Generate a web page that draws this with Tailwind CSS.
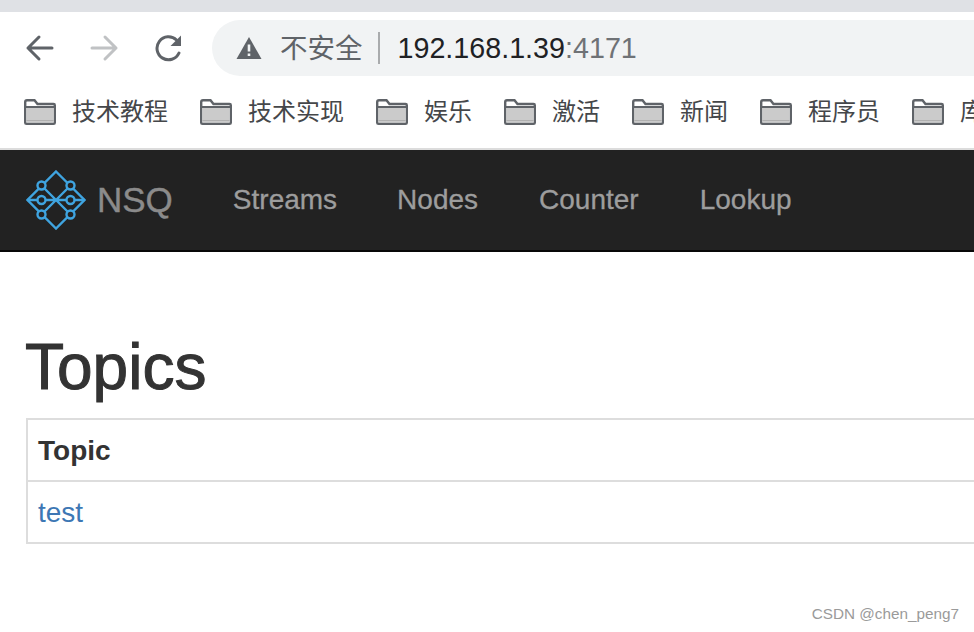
<!DOCTYPE html>
<html lang="zh-CN">
<head>
    <meta charset="UTF-8" />
    <script src="https://cdn.jsdelivr.net/npm/@tailwindcss/browser@4"></script>
    <title>NSQ</title>
</head>
<body class="relative w-[974px] h-[632px] overflow-hidden bg-white font-['Liberation_Sans','Noto_Sans_CJK_SC',sans-serif]">

    <!-- browser chrome -->
    <div class="h-3 bg-[#dfe1e5]"></div>
    <div class="flex items-end h-16">
        <div class="flex items-center h-14 w-[212px] pl-[25px] gap-[35px] shrink-0">
            <svg class="w-[30px] h-[30px]" viewBox="0 0 30 30" fill="none" stroke="#5f6368" stroke-width="3" stroke-linecap="round" stroke-linejoin="round"><path d="M27 15H3M14 4L3 15 14 26"/></svg>
            <svg class="w-[30px] h-[30px]" viewBox="0 0 30 30" fill="none" stroke="#c0c2c4" stroke-width="3" stroke-linecap="round" stroke-linejoin="round"><path d="M2 15H26M15 4L26 15 15 26"/></svg>
            <svg class="w-[30px] h-[30px]" viewBox="0 0 30 30" fill="none"><path d="M24 20A11.500 11.500 0 1 1 21.500 7" stroke="#5f6368" stroke-width="3" stroke-linecap="round"/><path d="M26 2.500V13H15.500Z" fill="#5f6368"/></svg>
        </div>
        <div class="flex items-center flex-1 h-14 bg-[#f1f3f4] rounded-l-[28px]">
            <svg class="ml-6 w-[26px] h-[24px]" viewBox="0 0 26 24"><path d="M13 1L25.500 23H.5Z" fill="#5f6368"/><path d="M11.700 8.500H14.300V15.500H11.700ZM11.700 17.500H14.300V20H11.700Z" fill="#f1f3f4"/></svg>
            <span class="ml-[18px] pt-px text-[27.500px] leading-none text-[#5f6368]">不安全</span>
            <div class="ml-[15px] w-0.5 h-8 bg-[#a9abad]"></div>
            <span class="ml-[18px] text-[28.700px] leading-none text-[#202124]">192.168.1.39<span class="text-[#6f7276]">:4171</span></span>
        </div>
    </div>
    <div class="flex items-center h-[72px] pl-6 text-[24px] leading-none text-[#45474a] whitespace-nowrap">
        <div class="flex items-center w-[176px] shrink-0"><svg class="w-8 h-[26px]" viewBox="0 0 32 26"><path d="M1.200 23.800V3Q1.200 1.200 3 1.200H10.500L13.500 5H29.500Q30.800 5 30.800 6.200V23.800Q30.800 24.800 29.500 24.800H2.500Q1.200 24.800 1.200 23.800Z" fill="#fff" stroke="#5f6368" stroke-width="2.400"/><path d="M2.400 8.500H29.600V23.600H2.400Z" fill="#cbcbcb"/><path d="M2 8H30" stroke="#5f6368" stroke-width="2"/><path d="M2.400 21.500H29.600" stroke="#b0b0b0" stroke-width="1"/></svg><span class="ml-4">技术教程</span></div>
        <div class="flex items-center w-[176px] shrink-0"><svg class="w-8 h-[26px]" viewBox="0 0 32 26"><path d="M1.200 23.800V3Q1.200 1.200 3 1.200H10.500L13.500 5H29.500Q30.800 5 30.800 6.200V23.800Q30.800 24.800 29.500 24.800H2.500Q1.200 24.800 1.200 23.800Z" fill="#fff" stroke="#5f6368" stroke-width="2.400"/><path d="M2.400 8.500H29.600V23.600H2.400Z" fill="#cbcbcb"/><path d="M2 8H30" stroke="#5f6368" stroke-width="2"/><path d="M2.400 21.500H29.600" stroke="#b0b0b0" stroke-width="1"/></svg><span class="ml-4">技术实现</span></div>
        <div class="flex items-center w-[128px] shrink-0"><svg class="w-8 h-[26px]" viewBox="0 0 32 26"><path d="M1.200 23.800V3Q1.200 1.200 3 1.200H10.500L13.500 5H29.500Q30.800 5 30.800 6.200V23.800Q30.800 24.800 29.500 24.800H2.500Q1.200 24.800 1.200 23.800Z" fill="#fff" stroke="#5f6368" stroke-width="2.400"/><path d="M2.400 8.500H29.600V23.600H2.400Z" fill="#cbcbcb"/><path d="M2 8H30" stroke="#5f6368" stroke-width="2"/><path d="M2.400 21.500H29.600" stroke="#b0b0b0" stroke-width="1"/></svg><span class="ml-4">娱乐</span></div>
        <div class="flex items-center w-[128px] shrink-0"><svg class="w-8 h-[26px]" viewBox="0 0 32 26"><path d="M1.200 23.800V3Q1.200 1.200 3 1.200H10.500L13.500 5H29.500Q30.800 5 30.800 6.200V23.800Q30.800 24.800 29.500 24.800H2.500Q1.200 24.800 1.200 23.800Z" fill="#fff" stroke="#5f6368" stroke-width="2.400"/><path d="M2.400 8.500H29.600V23.600H2.400Z" fill="#cbcbcb"/><path d="M2 8H30" stroke="#5f6368" stroke-width="2"/><path d="M2.400 21.500H29.600" stroke="#b0b0b0" stroke-width="1"/></svg><span class="ml-4">激活</span></div>
        <div class="flex items-center w-[128px] shrink-0"><svg class="w-8 h-[26px]" viewBox="0 0 32 26"><path d="M1.200 23.800V3Q1.200 1.200 3 1.200H10.500L13.500 5H29.500Q30.800 5 30.800 6.200V23.800Q30.800 24.800 29.500 24.800H2.500Q1.200 24.800 1.200 23.800Z" fill="#fff" stroke="#5f6368" stroke-width="2.400"/><path d="M2.400 8.500H29.600V23.600H2.400Z" fill="#cbcbcb"/><path d="M2 8H30" stroke="#5f6368" stroke-width="2"/><path d="M2.400 21.500H29.600" stroke="#b0b0b0" stroke-width="1"/></svg><span class="ml-4">新闻</span></div>
        <div class="flex items-center w-[152px] shrink-0"><svg class="w-8 h-[26px]" viewBox="0 0 32 26"><path d="M1.200 23.800V3Q1.200 1.200 3 1.200H10.500L13.500 5H29.500Q30.800 5 30.800 6.200V23.800Q30.800 24.800 29.500 24.800H2.500Q1.200 24.800 1.200 23.800Z" fill="#fff" stroke="#5f6368" stroke-width="2.400"/><path d="M2.400 8.500H29.600V23.600H2.400Z" fill="#cbcbcb"/><path d="M2 8H30" stroke="#5f6368" stroke-width="2"/><path d="M2.400 21.500H29.600" stroke="#b0b0b0" stroke-width="1"/></svg><span class="ml-4">程序员</span></div>
        <div class="flex items-center shrink-0"><svg class="w-8 h-[26px]" viewBox="0 0 32 26"><path d="M1.200 23.800V3Q1.200 1.200 3 1.200H10.500L13.500 5H29.500Q30.800 5 30.800 6.200V23.800Q30.800 24.800 29.500 24.800H2.500Q1.200 24.800 1.200 23.800Z" fill="#fff" stroke="#5f6368" stroke-width="2.400"/><path d="M2.400 8.500H29.600V23.600H2.400Z" fill="#cbcbcb"/><path d="M2 8H30" stroke="#5f6368" stroke-width="2"/><path d="M2.400 21.500H29.600" stroke="#b0b0b0" stroke-width="1"/></svg><span class="ml-4">库</span></div>
    </div>
    <div class="h-0.5 bg-[#dcdcdc]"></div>

    <!-- navbar -->
    <nav class="flex items-center h-[102px] bg-[#222] border-b-2 border-[#080808] text-[#9d9d9d] text-[28px] whitespace-nowrap [-webkit-text-stroke:0.3px_#9d9d9d]">
        <svg class="ml-[26px] w-[60px] h-[60px]" viewBox="0 0 60 60" fill="none" stroke="#3fa4e0" stroke-width="2.400"><path d="M30 1.500L58.500 30 30 58.500 1.500 30Z"/><path d="M1.500 30H58.500M15.500 15.500L44.500 44.500M44.500 15.500L15.500 44.500"/><g fill="#222"><circle cx="15.500" cy="15.500" r="4"/><circle cx="44.500" cy="15.500" r="4"/><circle cx="15.500" cy="30" r="4"/><circle cx="44.500" cy="30" r="4"/><circle cx="15.500" cy="44.500" r="4"/><circle cx="44.500" cy="44.500" r="4"/></g></svg>
        <span class="ml-[11px] text-[35px] text-[#8b8b8b] [-webkit-text-stroke:0.4px_#8b8b8b]">NSQ</span>
        <a class="ml-[60px]">Streams</a>
        <a class="ml-[60px]">Nodes</a>
        <a class="ml-[61px]">Counter</a>
        <a class="ml-[61px]">Lookup</a>
    </nav>

    <!-- content -->
    <main class="pl-[26px]">
        <h1 class="mt-[80px] -ml-px text-[64px] leading-[70px] text-[#333] font-normal [-webkit-text-stroke:1px_#333]">Topics</h1>
        <table class="mt-[16px] w-[1000px] border-collapse text-[28px] text-left">
            <tr class="h-[62px]"><th class="border-2 border-[#ddd] px-[10px] pt-0.5 font-bold text-[#333]">Topic</th></tr>
            <tr class="h-[62px]"><td class="border-2 border-[#ddd] px-[10px] pt-0.5 text-[#3d77b4]">test</td></tr>
        </table>
    </main>

    <!-- watermark -->
    <div class="absolute right-[15px] bottom-[11px] text-[15.300px] leading-none text-[#9a9a9a]">CSDN @chen_peng7</div>
</body>
</html>
